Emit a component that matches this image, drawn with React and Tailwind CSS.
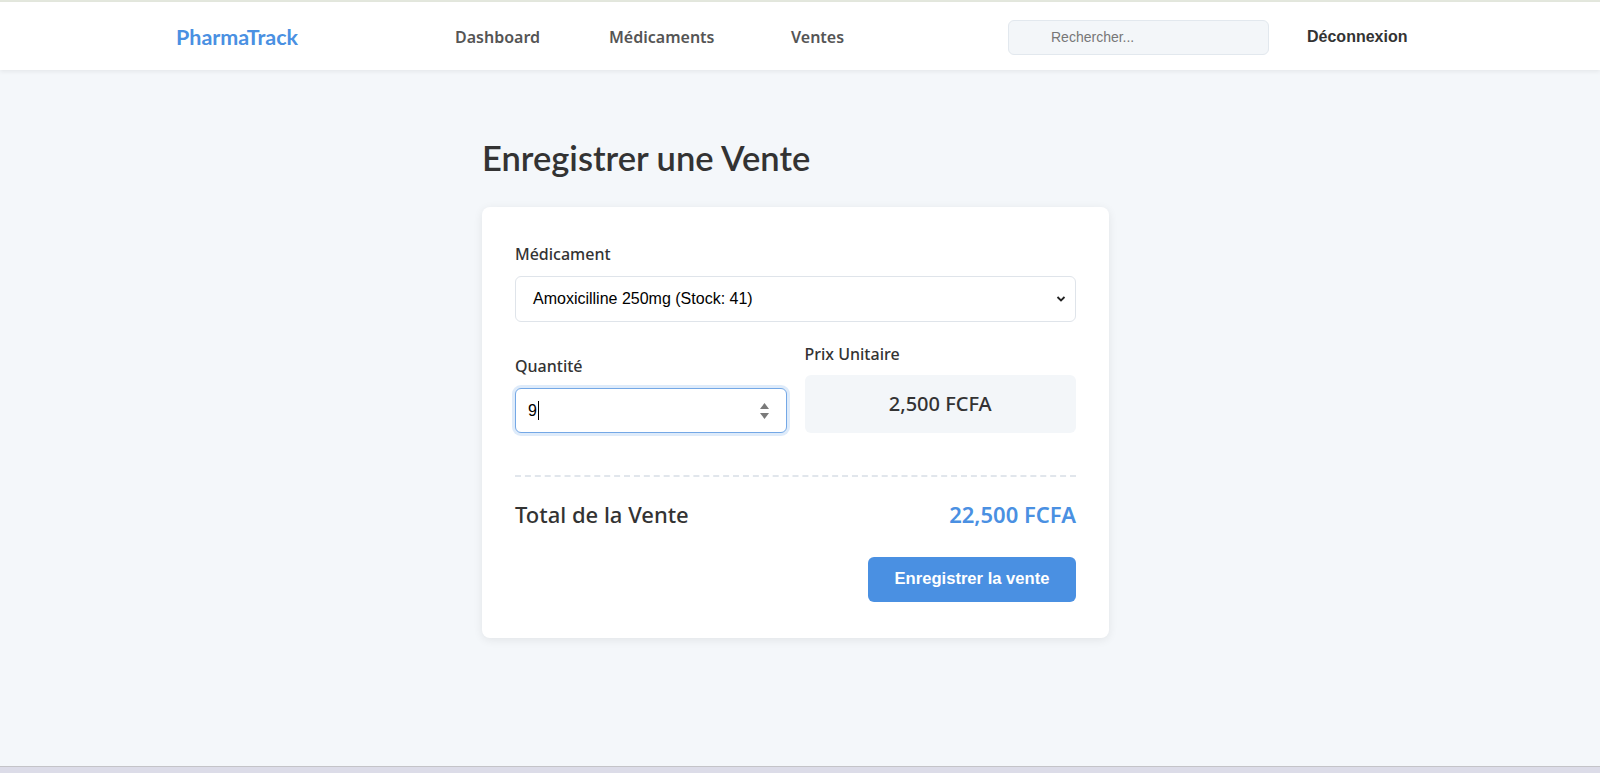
import React from "react";

const NavLink = ({ label, width }) => (
  <div className="shrink-0" style={{ width }}>
    <a className="text-[16px] font-semibold text-[#555]">{label}</a>
  </div>
);

const App = () => {
  return (
    <div className="h-[773px] flex flex-col bg-[#f4f7fa] font-['Noto_Sans',sans-serif] text-[#333] overflow-hidden">
      {/* top line */}
      <div className="h-[2px] bg-[#e3e7dd]"></div>

      {/* Header */}
      <header className="h-[68px] bg-white shadow-[0_2px_4px_rgba(0,0,0,0.06)] flex items-center pl-[176px] pt-[2px] relative z-10">
        <div className="w-[279px] shrink-0">
          <span className="text-[21.5px] font-bold text-[#4a90e2] font-['Lato',sans-serif]">PharmaTrack</span>
        </div>
        <NavLink label="Dashboard" width="154px" />
        <NavLink label="Médicaments" width="182px" />
        <NavLink label="Ventes" width="217px" />
        <input
          className="w-[261px] h-[35px] shrink-0 rounded-md border border-[#e2e8ee] bg-[#f3f6f9] pl-[42px] text-[14px] font-['Liberation_Sans',sans-serif] placeholder:text-[#777] outline-none"
          placeholder="Rechercher..."
        />
        <button className="ml-[38px] text-[16px] font-bold text-[#333] font-['Liberation_Sans',sans-serif]">
          Déconnexion
        </button>
      </header>

      {/* Main */}
      <main className="flex-1 pr-[9px]">
        <div className="w-[627px] mx-auto pt-[67px]">
          <h1 className="text-[34.5px] leading-[1.2] font-semibold text-[#333] mb-[29px] font-['Lato',sans-serif]">
            Enregistrer une Vente
          </h1>

          <div className="bg-white rounded-lg shadow-[0_2px_10px_rgba(0,0,0,0.08)] px-[33px] pt-[35px] pb-[36px]">
            <label className="block text-[16px] font-medium leading-6 mb-[10px]">Médicament</label>
            <div className="relative">
              <div className="h-[46px] w-full rounded-md border border-[#dfe4ea] bg-white flex items-center pl-[17px] text-[16px] text-black font-['Liberation_Sans',sans-serif]">
                Amoxicilline 250mg (Stock: 41)
              </div>
              <svg
                className="absolute right-[10px] top-[19px] w-[10px] h-[8px]"
                viewBox="0 0 10 8"
                fill="none"
                stroke="#222"
                strokeWidth="1.8"
              >
                <path d="M1.5 2 L5 5.5 L8.5 2" />
              </svg>
            </div>

            <div className="grid grid-cols-2 gap-[18px] items-end mt-[20px]">
              <div>
                <label className="block text-[16px] font-medium leading-6 mb-[10px]">Quantité</label>
                <div className="relative h-[45px] rounded-md border border-[#74a8e6] shadow-[0_0_0_3px_rgba(74,144,226,0.18)] bg-white flex items-center pl-[12px] text-[16px] text-black font-['Liberation_Sans',sans-serif]">
                  <span>9</span>
                  <span className="w-px h-[19px] bg-black ml-px"></span>
                  <svg
                    className="absolute right-[16px] top-[12px] w-[11px] h-[20px]"
                    viewBox="0 0 11 20"
                    fill="#7a7a7a"
                  >
                    <path d="M5.5 2 L10 8 L1 8 Z" />
                    <path d="M1 12 L10 12 L5.5 18 Z" />
                  </svg>
                </div>
              </div>
              <div>
                <label className="block text-[16px] font-medium leading-6 mb-[9px]">Prix Unitaire</label>
                <div className="h-[58px] rounded-md bg-[#f3f6f9] flex items-center justify-center text-[20px] font-medium text-[#333]">
                  2,500 FCFA
                </div>
              </div>
            </div>

            <div className="mt-[42px] border-t-2 border-dashed border-[#e1e6ec]"></div>

            <div className="flex items-center justify-between mt-[21px] h-[32px]">
              <span className="text-[22px] font-medium text-[#333]">Total de la Vente</span>
              <span className="text-[22px] font-semibold text-[#4a90e2]">22,500 FCFA</span>
            </div>

            <div className="flex justify-end mt-[27px]">
              <button className="w-[208px] h-[45px] rounded-md bg-[#4a90e2] text-white text-[16.6px] font-bold font-['Liberation_Sans',sans-serif]">
                Enregistrer la vente
              </button>
            </div>
          </div>
        </div>
      </main>

      {/* bottom strip */}
      <div className="h-[7px] border-t border-[#c4c4c8] bg-[#dcdce8]"></div>
    </div>
  );
};

export default App;
